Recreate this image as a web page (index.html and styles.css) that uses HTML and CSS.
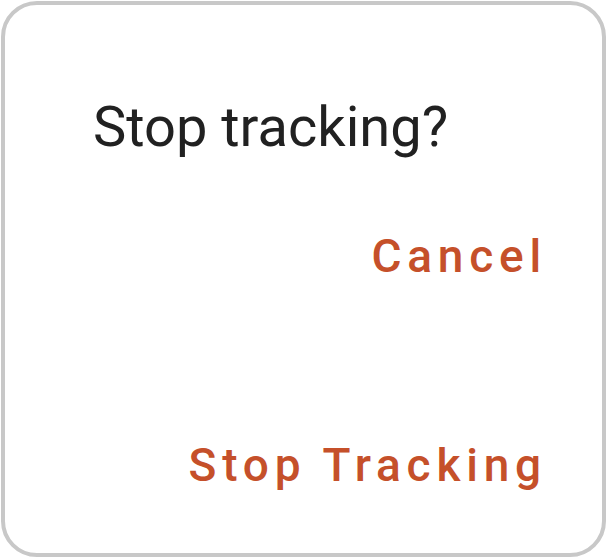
FILE: index.html
```html
<!DOCTYPE html>
<html lang="en">
<head>
    <meta charset="UTF-8">
    <meta name="viewport" content="width=device-width, initial-scale=1.0">
    <title>Stop tracking?</title>
    <link rel="stylesheet" href="styles.css">
</head>
<body>
    <div class="dialog">
        <h2 class="dialog-title">Stop tracking?</h2>
        <div class="dialog-actions">
            <button class="dialog-btn" id="cancelBtn">Cancel</button>
            <button class="dialog-btn dialog-btn-confirm" id="stopBtn">Stop Tracking</button>
        </div>
    </div>
</body>
</html>
```

FILE: styles.css
```css
body {
    margin: 0;
    padding: 0;
    background-color: #ffffff;
    font-family: Roboto, "Noto Sans", sans-serif;
}

.dialog {
    box-sizing: border-box;
    width: 605px;
    height: 556px;
    margin: 1px;
    padding: 88px 55px 0 88px;
    border: 4px solid #c8c8c8;
    border-radius: 36px;
    background-color: #ffffff;
    display: flex;
    flex-direction: column;
}

.dialog-title {
    margin: 0;
    font-size: 56px;
    font-weight: 400;
    line-height: 68px;
    color: #212121;
}

.dialog-actions {
    display: flex;
    flex-direction: column;
    align-items: flex-end;
    margin-top: 67px;
}

.dialog-btn {
    padding: 0;
    border: none;
    background: none;
    font-family: inherit;
    font-size: 46px;
    font-weight: 500;
    line-height: 56px;
    letter-spacing: 5.8px;
    color: #c5502a;
    cursor: pointer;
}

.dialog-btn-confirm {
    margin-top: 153px;
}
```
